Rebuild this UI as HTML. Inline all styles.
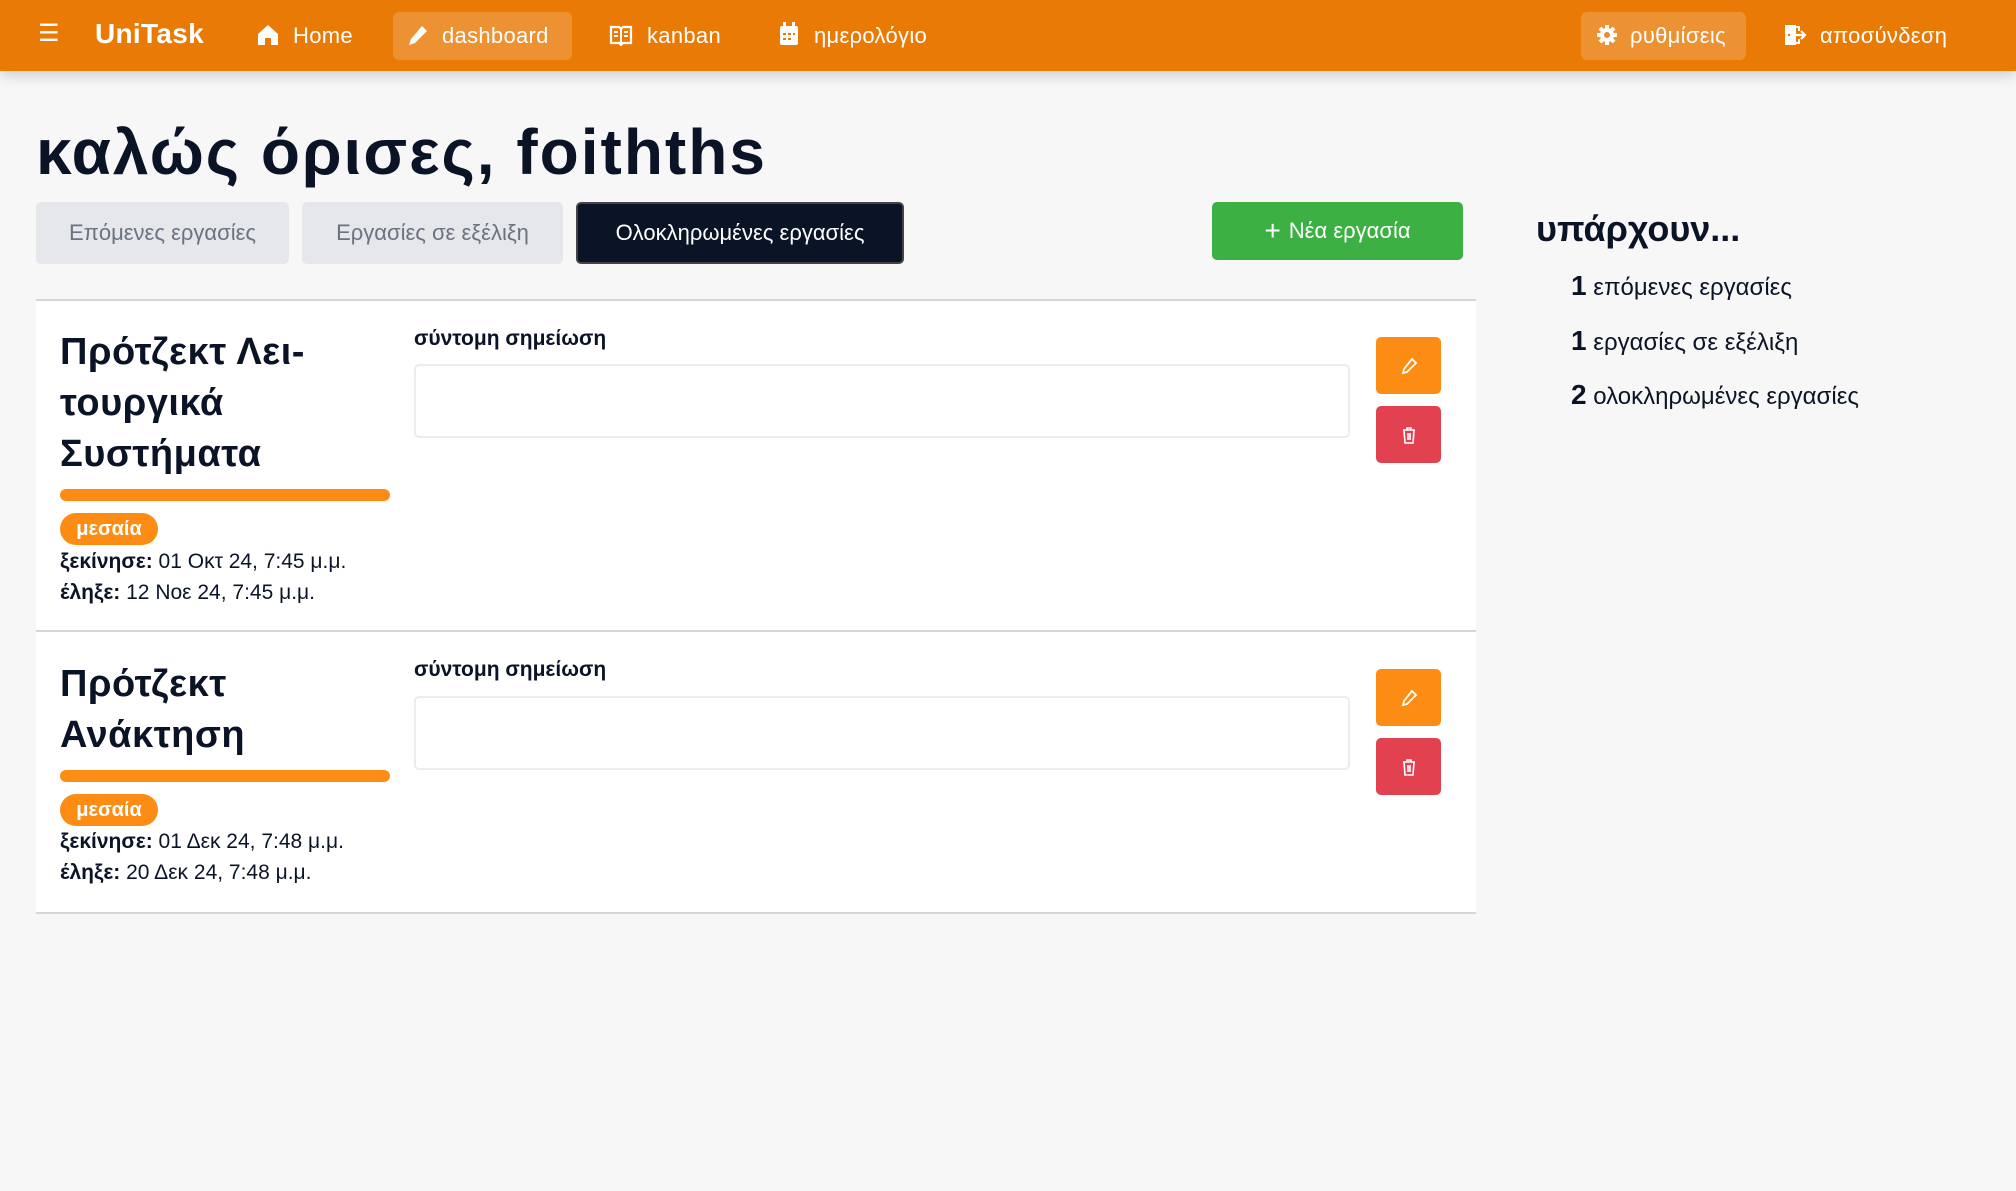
<!DOCTYPE html>
<html><head><meta charset="utf-8">
<style>
*{box-sizing:border-box;margin:0;padding:0}
body{width:2016px;height:1191px;background:#f7f7f7;font-family:"Liberation Sans","DejaVu Sans",sans-serif;color:#0b1426;position:relative;overflow:hidden}
.a{position:absolute;white-space:nowrap}
.nav{position:absolute;left:0;top:0;width:2016px;height:71px;background:#e97a05;box-shadow:0 4px 14px rgba(0,0,0,.18)}
.nav .a{color:#fff;font-size:22px;line-height:28px;top:22px;letter-spacing:0.3px}
.act{position:absolute;background:rgba(255,255,255,.18);border-radius:6px;top:12px;height:48px}
.tab{position:absolute;top:202px;height:62px;border-radius:5px;background:#e5e7eb;color:#6b7280;font-size:22px;display:flex;align-items:center;justify-content:center}
.card{position:absolute;left:36px;width:1440px;background:#fff;border-bottom:2px solid #d4d6da}
.title{position:absolute;left:24px;font-size:38px;font-weight:bold;line-height:51px;width:340px;letter-spacing:0.5px}
.bar{position:absolute;left:24px;width:330px;height:12px;border-radius:6px;background:#fd8c15}
.badge{position:absolute;left:24px;width:98px;height:32px;border-radius:16px;background:#fd8c15;color:#fff;font-weight:bold;font-size:20px;text-align:center;line-height:32px}
.dt{position:absolute;left:24px;font-size:21px;line-height:26px}
.lab{position:absolute;left:378px;font-size:21px;font-weight:bold}
.ta{position:absolute;left:378px;width:936px;height:74px;border:2px solid #ececec;border-radius:5px;background:#fff}
.btn{position:absolute;left:1340px;width:65px;height:57px;border-radius:5px;display:flex;align-items:center;justify-content:center}
</style></head><body>
<div class="nav">
  <div class="a" style="left:38px;top:20px;font-size:24px">&#9776;</div>
  <div class="a" style="left:95px;top:20px;font-size:28px;font-weight:bold">UniTask</div>
  <svg class="a" style="left:257px;top:24px" width="22" height="22" viewBox="0 0 22 22"><path d="M11 1L1 10v11h7v-7h6v7h7V10z" fill="#fff"/></svg>
  <div class="a" style="left:293px">Home</div>
  <div class="act" style="left:393px;width:179px"></div>
  <svg class="a" style="left:407px;top:24px" width="22" height="22" viewBox="0 0 22 22"><path d="M15 2l5 5L8 19l-6 2 2-6z" fill="#fff"/></svg>
  <div class="a" style="left:442px">dashboard</div>
  <svg class="a" style="left:609px;top:24px" width="24" height="22" viewBox="0 0 24 22"><path d="M2 3h8l2 2 2-2h8v16h-8l-2 2-2-2H2z" fill="none" stroke="#fff" stroke-width="2.2"/><path d="M12 5v15M5 8h4M5 12h4M15 8h4M15 12h4" stroke="#fff" stroke-width="2"/></svg>
  <div class="a" style="left:647px">kanban</div>
  <svg class="a" style="left:779px;top:22px" width="20" height="24" viewBox="0 0 20 24"><rect x="1" y="4" width="18" height="19" rx="2" fill="#fff"/><rect x="4" y="0" width="3" height="6" fill="#fff"/><rect x="13" y="0" width="3" height="6" fill="#fff"/><path d="M4 12h3M9 12h3M14 12h2M4 17h3M9 17h3" stroke="#e97a05" stroke-width="2"/></svg>
  <div class="a" style="left:814px">ημερολόγιο</div>
  <div class="act" style="left:1581px;width:165px"></div>
  <svg class="a" style="left:1596px;top:24px" width="22" height="22" viewBox="0 0 22 22"><circle cx="11" cy="11" r="7" fill="#fff"/><path d="M11 1v20M1 11h20M4 4l14 14M18 4L4 18" stroke="#fff" stroke-width="4"/><circle cx="11" cy="11" r="3" fill="#ec8c2b"/></svg>
  <div class="a" style="left:1630px">ρυθμίσεις</div>
  <svg class="a" style="left:1783px;top:23px" width="24" height="24" viewBox="0 0 24 24"><path d="M2 2h11v20H2z" fill="#fff"/><path d="M13 4h3v4M16 16v4h-3" stroke="#fff" stroke-width="2" fill="none"/><path d="M12 12h10M18 8l4 4-4 4" stroke="#fff" stroke-width="2.2" fill="none"/><path d="M6 11v2" stroke="#e97a05" stroke-width="2"/></svg>
  <div class="a" style="left:1820px">αποσύνδεση</div>
</div>

<div class="a" style="left:36px;top:112px;font-size:64px;font-weight:bold;line-height:80px;letter-spacing:2px">καλώς όρισες, foithths</div>

<div class="tab" style="left:36px;width:253px">Επόμενες εργασίες</div>
<div class="tab" style="left:302px;width:261px">Εργασίες σε εξέλιξη</div>
<div class="tab" style="left:576px;width:328px;background:#0b1426;color:#fff;border:2px solid #444">Ολοκληρωμένες εργασίες</div>
<div class="tab" style="left:1212px;width:251px;height:58px;background:#3cb043;color:#fff"><span style="font-size:28px;margin-right:8px">+</span>Νέα εργασία</div>

<div style="position:absolute;left:36px;top:299px;width:1440px;height:2px;background:#d4d6da"></div>
<div class="card" style="top:301px;height:331px">
  <div class="title" style="top:26px">Πρότζεκτ Λει-<br>τουργικά<br>Συστήματα</div>
  <div class="bar" style="top:188px"></div>
  <div class="badge" style="top:212px">μεσαία</div>
  <div class="dt" style="top:248px"><b>ξεκίνησε:</b> 01 Οκτ 24, 7:45 μ.μ.</div>
  <div class="dt" style="top:279px"><b>έληξε:</b> 12 Νοε 24, 7:45 μ.μ.</div>
  <div class="lab" style="top:26px">σύντομη σημείωση</div>
  <div class="ta" style="top:63px"></div>
  <div class="btn" style="top:36px;background:#fd8c15"><svg width="18" height="18" viewBox="0 0 18 18"><path d="M12 2l4 4-9 9-4 1 1-4z" fill="none" stroke="#fff" stroke-width="1.8"/></svg></div>
  <div class="btn" style="top:105px;background:#e2414f"><svg width="16" height="18" viewBox="0 0 16 18"><path d="M2 4h12M6 4V2h4v2M3 4l1 13h8l1-13M7 7v7M9 7v7" fill="none" stroke="#fff" stroke-width="1.6"/></svg></div>
</div>
<div class="card" style="top:632px;height:282px">
  <div class="title" style="top:27px">Πρότζεκτ<br>Ανάκτηση</div>
  <div class="bar" style="top:138px"></div>
  <div class="badge" style="top:162px">μεσαία</div>
  <div class="dt" style="top:197px"><b>ξεκίνησε:</b> 01 Δεκ 24, 7:48 μ.μ.</div>
  <div class="dt" style="top:228px"><b>έληξε:</b> 20 Δεκ 24, 7:48 μ.μ.</div>
  <div class="lab" style="top:26px">σύντομη σημείωση</div>
  <div class="ta" style="top:64px"></div>
  <div class="btn" style="top:37px;background:#fd8c15"><svg width="18" height="18" viewBox="0 0 18 18"><path d="M12 2l4 4-9 9-4 1 1-4z" fill="none" stroke="#fff" stroke-width="1.8"/></svg></div>
  <div class="btn" style="top:106px;background:#e2414f"><svg width="16" height="18" viewBox="0 0 16 18"><path d="M2 4h12M6 4V2h4v2M3 4l1 13h8l1-13M7 7v7M9 7v7" fill="none" stroke="#fff" stroke-width="1.6"/></svg></div>
</div>

<div class="a" style="left:1536px;top:206px;font-size:36px;font-weight:bold;line-height:46px">υπάρχουν...</div>
<div class="a" style="left:1571px;top:270px;font-size:24px"><b style="font-size:28px">1</b> επόμενες εργασίες</div>
<div class="a" style="left:1571px;top:325px;font-size:24px"><b style="font-size:28px">1</b> εργασίες σε εξέλιξη</div>
<div class="a" style="left:1571px;top:379px;font-size:24px"><b style="font-size:28px">2</b> ολοκληρωμένες εργασίες</div>
</body></html>
